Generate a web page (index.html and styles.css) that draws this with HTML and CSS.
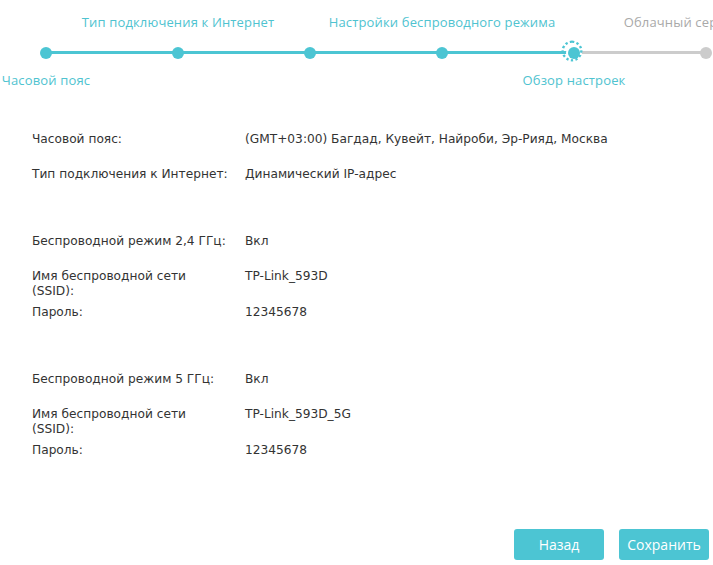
FILE: index.html
```html
<!DOCTYPE html>
<html lang="ru">
<head>
<meta charset="utf-8">
<title>Быстрая настройка</title>
<link rel="stylesheet" href="styles.css">
</head>
<body>
<div class="page">
  <div class="stepper">
    <div class="step done first">
      <div class="label top"></div>
      <div class="track"><span class="dot"></span></div>
      <div class="label bottom">Часовой пояс</div>
    </div>
    <div class="step done">
      <div class="label top">Тип подключения к Интернет</div>
      <div class="track"><span class="dot"></span></div>
      <div class="label bottom"></div>
    </div>
    <div class="step done">
      <div class="label top"></div>
      <div class="track"><span class="dot"></span></div>
      <div class="label bottom"></div>
    </div>
    <div class="step done">
      <div class="label top">Настройки беспроводного режима</div>
      <div class="track"><span class="dot"></span></div>
      <div class="label bottom"></div>
    </div>
    <div class="step active">
      <div class="label top"></div>
      <div class="track"><span class="dot"></span></div>
      <div class="label bottom">Обзор настроек</div>
    </div>
    <div class="step todo last">
      <div class="label top">Облачный сервис TP-Link</div>
      <div class="track"><span class="dot"></span></div>
      <div class="label bottom"></div>
    </div>
  </div>

  <div class="summary">
    <div class="group">
      <div class="row"><div class="key">Часовой пояс:</div><div class="val">(GMT+03:00) Багдад, Кувейт, Найроби, Эр-Рияд, Москва</div></div>
      <div class="row"><div class="key">Тип подключения к Интернет:</div><div class="val">Динамический IP-адрес</div></div>
    </div>
    <div class="group">
      <div class="row"><div class="key">Беспроводной режим 2,4 ГГц:</div><div class="val">Вкл</div></div>
      <div class="row"><div class="key">Имя беспроводной сети (SSID):</div><div class="val">TP-Link_593D</div></div>
      <div class="row"><div class="key">Пароль:</div><div class="val">12345678</div></div>
    </div>
    <div class="group">
      <div class="row"><div class="key">Беспроводной режим 5 ГГц:</div><div class="val">Вкл</div></div>
      <div class="row"><div class="key">Имя беспроводной сети (SSID):</div><div class="val">TP-Link_593D_5G</div></div>
      <div class="row"><div class="key">Пароль:</div><div class="val">12345678</div></div>
    </div>
  </div>

  <div class="actions">
    <button class="btn">Назад</button>
    <button class="btn">Сохранить</button>
  </div>
</div>
</body>
</html>
```

FILE: styles.css
```css
html, body {
  margin: 0;
  padding: 0;
  background: #ffffff;
  overflow: hidden;
}

.page {
  width: 713px;
  height: 565px;
  overflow: hidden;
  position: relative;
}

/* ---------- stepper ---------- */
.stepper {
  display: flex;
  margin-left: -20px;
  padding-top: 14px;
  font-family: "Open Sans", "Liberation Sans", sans-serif;
  font-size: 13px;
  letter-spacing: 0.15px;
}

.step {
  flex: 0 0 132px;
  width: 132px;
  display: flex;
  flex-direction: column;
  align-items: center;
}

.label {
  height: 16px;
  line-height: 16px;
  white-space: nowrap;
  color: #4fc3d0;
  display: flex;
  justify-content: center;
}

.step.todo .label { color: #a9a9a9; }

.label.top { margin-bottom: 12px; }
.label.bottom { margin-top: 8px; }

.track {
  position: relative;
  width: 100%;
  height: 22px;
  display: flex;
  align-items: center;
  justify-content: center;
}

.track::before,
.track::after {
  content: "";
  position: absolute;
  top: 9px;
  height: 3px;
  width: 50%;
  background: #4cc5d3;
}
.track::before { left: 0; }
.track::after { right: 0; }

.step.first .track::before { display: none; }
.step.last .track::after { display: none; }
.step.active .track::after { background: #cccccc; }
.step.todo .track::before,
.step.todo .track::after { background: #cccccc; }

.dot {
  position: relative;
  z-index: 1;
  width: 12px;
  height: 12px;
  border-radius: 50%;
  background: #4cc5d3;
  margin-top: -1px;
}

.step.todo .dot { background: #cccccc; }

.step.active .dot {
  box-shadow: 0 0 0 2px #ffffff;
}
.step.active .dot::after {
  content: "";
  position: absolute;
  left: -5px;
  top: -5px;
  width: 18px;
  height: 18px;
  border: 2px dotted #4cc5d3;
  border-radius: 50%;
  box-sizing: border-box;
  transform: scale(1.17);
}

/* ---------- summary ---------- */
.summary {
  margin-top: 44px;
  padding-left: 32px;
  font-family: "DejaVu Sans", Verdana, sans-serif;
  font-size: 12.2px;
  color: #333333;
}

.group + .group { margin-top: 32px; }

.row {
  display: grid;
  grid-template-columns: 213px 1fr;
  min-height: 35px;
  padding-bottom: 6px;
  box-sizing: border-box;
  line-height: 15px;
}

.key { max-width: 198px; }

/* ---------- actions ---------- */
.actions {
  position: absolute;
  right: 4px;
  top: 529px;
  display: flex;
  gap: 15px;
}

.btn {
  width: 90px;
  height: 31px;
  border: none;
  border-radius: 3px;
  background: #4cc5d3;
  color: #ffffff;
  font-family: "Open Sans", "Liberation Sans", sans-serif;
  font-size: 14px;
  padding: 0;
  cursor: pointer;
}
```
